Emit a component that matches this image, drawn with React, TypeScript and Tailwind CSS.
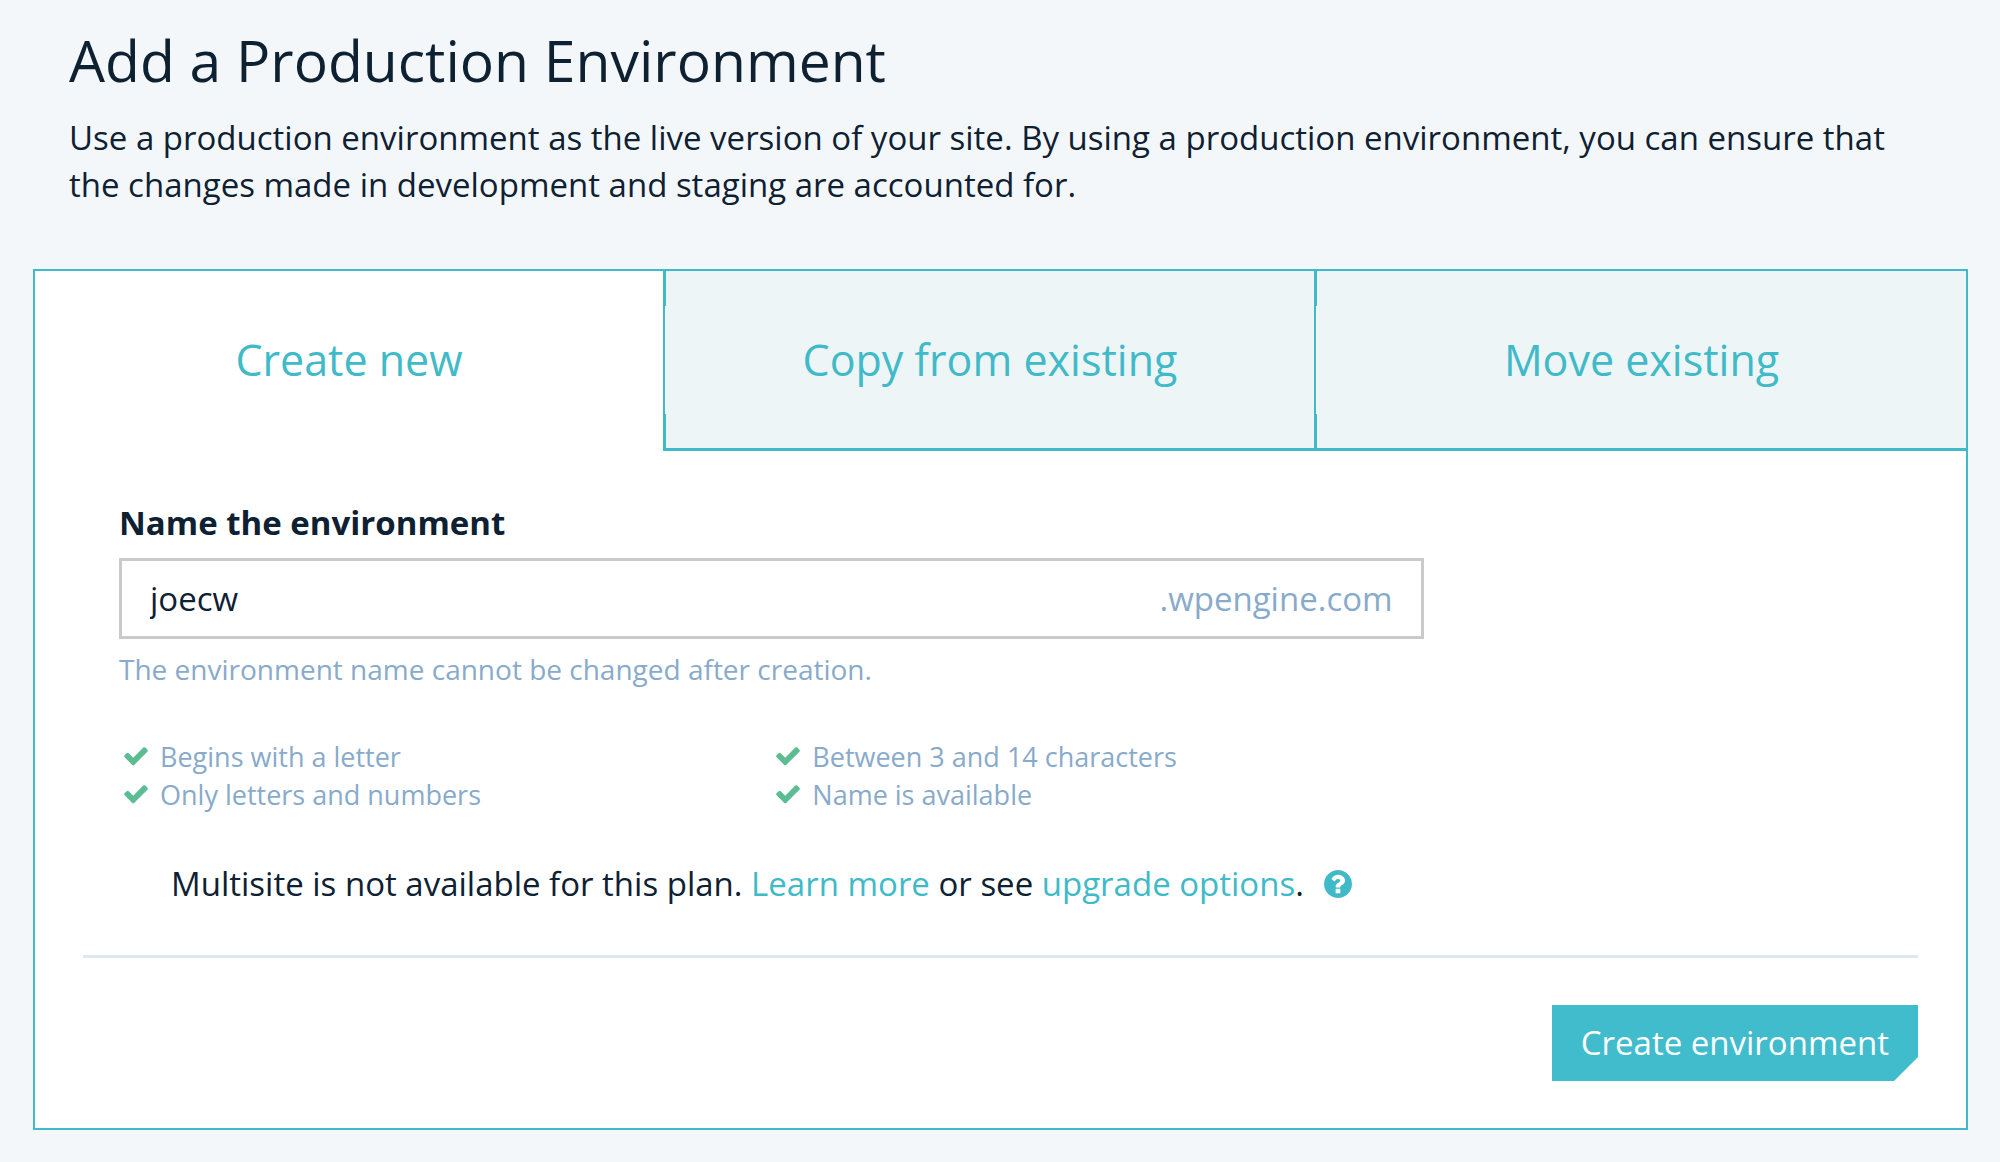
import { useState } from "react";

const tabs = ["Create new", "Copy from existing", "Move existing"];

const rules = [
	"Begins with a letter",
	"Between 3 and 14 characters",
	"Only letters and numbers",
	"Name is available",
];

function CheckIcon() {
	return (
		<svg viewBox="112 192 1568 1568" className="size-6 fill-[#5bbd91]" aria-hidden="true">
			<path d="M1671 566q0 40-28 68l-724 724-136 136q-28 28-68 28t-68-28l-136-136-362-362q-28-28-28-68t28-68l136-136q28-28 68-28t68 28l294 295 656-657q28-28 68-28t68 28l136 136q28 28 28 68z" />
		</svg>
	);
}

function HelpIcon() {
	return (
		<svg viewBox="128 128 1536 1536" className="size-7 fill-current" aria-hidden="true">
			<path d="M1024 1376v-192q0-14-9-23t-23-9h-192q-14 0-23 9t-9 23v192q0 14 9 23t23 9h192q14 0 23-9t9-23zm256-672q0-88-55.5-163t-138.5-116-170-41q-243 0-371 213-15 24 8 42l132 100q7 6 19 6 16 0 25-12 53-68 86-92 34-24 86-24 48 0 85.5 26t37.500 59q0 38-20 61t-68 45q-63 28-115.500 86.500t-52.500 125.500v36q0 14 9 23t23 9h192q14 0 23-9t9-23q0-19 21.500-49.500t54.500-49.500q32-18 49-28.500t46-35 44.500-48 28-60.500 12.500-81zm384 192q0 209-103 385.500t-279.500 279.500-385.500 103-385.500-103-279.500-279.500-103-385.500 103-385.500 279.500-279.500 385.500-103 385.500 103 279.500 279.500 103 385.500z" />
		</svg>
	);
}

export default function App() {
	const [active, setActive] = useState(0);
	const [name, setName] = useState("joecw");

	return (
		<main className="min-h-screen bg-[#f4f7fa] pt-[27px] pr-8 pb-8 pl-[33px] font-['Open_Sans',sans-serif] text-[#0e2132]">
			<header className="px-9">
				<h1 className="text-[57px] leading-[66px]">Add a Production Environment</h1>
				<p className="mt-[21px] text-[33px] leading-[47px]">
					Use a production environment as the live version of your site. By using a production
					environment, you can ensure that the changes made in development and staging are
					accounted for.
				</p>
			</header>

			<section className="mt-[61px] border-2 border-[#40bac8] bg-white">
				<div role="tablist" className="grid grid-cols-[628fr_651fr_652fr]">
					{tabs.map((tab, i) => (
						<button
							key={tab}
							type="button"
							role="tab"
							aria-selected={active === i}
							onClick={() => setActive(i)}
							className={`relative h-[180px] border-b-3 pt-0.5 text-[43px] text-[#40bac8] ${
								active === i
									? "border-white bg-white"
									: "border-l-3 border-b-[#40bac8] border-l-[#40bac8] bg-[#eef5f7]"
							}`}>
							{tab}
							{/* divider gets thinner in the middle */}
							{active !== i && (
								<span className="absolute top-[35px] -left-px h-[108px] w-px bg-white" />
							)}
						</button>
					))}
				</div>

				<form className="px-12 pt-12 pb-[47px]" onSubmit={(e) => e.preventDefault()}>
					<div className="px-9">
						<label htmlFor="env-name" className="block text-[33px] leading-[47px] font-bold">
							Name the environment
						</label>
						<div className="mt-3 flex h-[81px] w-[74%] items-center border-3 border-[#cacaca] px-7 text-[33px]">
							<input
								id="env-name"
								value={name}
								onChange={(e) => setName(e.target.value)}
								className="min-w-0 flex-1 outline-none"
							/>
							<span className="text-[#88aacb]">.wpengine.com</span>
						</div>
						<p className="mt-2.5 text-[28px] leading-[40px] text-[#88aacb]">
							The environment name cannot be changed after creation.
						</p>
						<ul className="mt-[49px] grid w-[74%] grid-cols-2 text-[27px] leading-[38px] text-[#88aacb]">
							{rules.map((rule) => (
								<li key={rule} className="flex items-center gap-3 pl-[5px]">
									<CheckIcon />
									{rule}
								</li>
							))}
						</ul>
						<p className="mt-[46px] flex items-center px-[52px] text-[33px] leading-[47px]">
							<span>
								Multisite is not available for this plan.{" "}
								<a href="#learn" className="text-[#40bac8]">Learn more</a> or see{" "}
								<a href="#upgrade" className="text-[#40bac8]">upgrade options</a>.
							</span>
							<button type="button" aria-label="Help" className="ml-5 text-[#40bac8]">
								<HelpIcon />
							</button>
						</p>
					</div>
					<hr className="mt-12 border-t-3 border-[#dce9f0]" />
					<div className="mt-[47px] flex justify-end">
						<button
							type="submit"
							className="h-[76px] bg-[#40bccd] px-[29px] text-[33px] text-white [clip-path:polygon(0_0,100%_0,100%_calc(100%-24px),calc(100%-24px)_100%,0_100%)]">
							Create environment
						</button>
					</div>
				</form>
			</section>
		</main>
	);
}
